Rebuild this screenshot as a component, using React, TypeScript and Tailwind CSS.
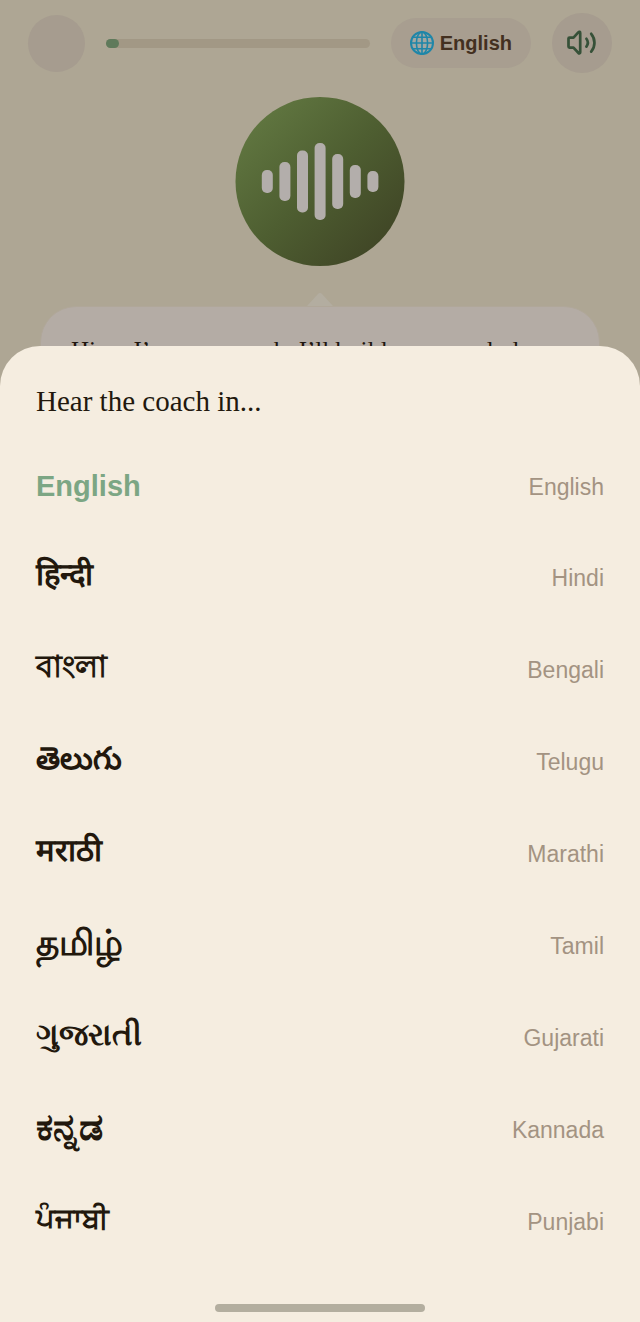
import React, { useState } from 'react';

interface Language {
  code: string;
  native: string;
  name: string;
  size: string;
}

// Scripts differ a lot in apparent size, so each one carries its own text size
const LANGUAGES: Language[] = [
  { code: 'en', native: 'English', name: 'English', size: 'text-[29px]' },
  { code: 'hi', native: 'हिन्दी', name: 'Hindi', size: 'text-[31px] pb-1.5' },
  { code: 'bn', native: 'বাংলা', name: 'Bengali', size: 'text-[31px] pb-1.5' },
  { code: 'te', native: 'తెలుగు', name: 'Telugu', size: 'text-[31px] pb-1.5' },
  { code: 'mr', native: 'मराठी', name: 'Marathi', size: 'text-[31px] pb-1.5' },
  { code: 'ta', native: 'தமிழ்', name: 'Tamil', size: 'text-[36px] pb-1.5' },
  { code: 'gu', native: 'ગુજરાતી', name: 'Gujarati', size: 'text-[31px] pb-1.5' },
  { code: 'kn', native: 'ಕನ್ನಡ', name: 'Kannada', size: 'text-[38px] pb-1.5' },
  { code: 'pa', native: 'ਪੰਜਾਬੀ', name: 'Punjabi', size: 'text-[29px] pb-1.5' },
];

const WAVE_BARS = [23, 39, 62, 77, 55, 33, 21];

const GlobeIcon: React.FC = () => (
  <svg width="24" height="24" viewBox="0 0 24 24" fill="none" stroke="#1f86a8" strokeWidth="1.6" aria-hidden="true">
    <circle cx="12" cy="12" r="11" fill="#a3a7a2" strokeWidth="2" />
    <ellipse cx="12" cy="12" rx="5.6" ry="11" />
    <path d="M12 1v22M1 12h22M3 6.2h18M3 17.8h18" />
  </svg>
);

const SpeakerIcon: React.FC = () => (
  <svg
    width="32"
    height="28"
    viewBox="0 0 32 28"
    fill="none"
    stroke="#365138"
    strokeWidth="2.7"
    strokeLinecap="round"
    strokeLinejoin="round"
    aria-hidden="true"
  >
    <path d="M3.5 8.6h4l5-5.4c.7-.8 1.7-.4 1.7.7v19.4c0 1.1-1 1.5-1.7.7l-5-5.4h-4c-.6 0-1-.4-1-1v-8c0-.6.4-1 1-1z" />
    <path d="M20.4 9.8a6.5 6.5 0 0 1 0 7.8" />
    <path d="M25.2 4.8a13.8 13.8 0 0 1 0 17.8" />
  </svg>
);

const CoachAvatar: React.FC = () => (
  <svg width="170" height="170" viewBox="0 0 170 170" role="img" aria-label="Coach">
    <defs>
      <linearGradient id="coach" x1="0.12" y1="0.12" x2="0.88" y2="0.88">
        <stop offset="0" stopColor="#607640" />
        <stop offset="0.5" stopColor="#4e5e31" />
        <stop offset="1" stopColor="#404626" />
      </linearGradient>
    </defs>
    <circle cx="85" cy="84.5" r="84.5" fill="url(#coach)" />
    {WAVE_BARS.map((height, index) => (
      <rect
        key={index}
        x={26.8 + index * 17.6}
        y={84.5 - height / 2}
        width="11"
        height={height}
        rx="5"
        fill="#b3aeab"
      />
    ))}
  </svg>
);

export default function App() {
  const [selected, setSelected] = useState('en');
  const current = LANGUAGES.find(l => l.code === selected);

  return (
    <div className="relative min-h-screen overflow-hidden bg-[#aea694] font-['Liberation_Sans',sans-serif]">
      {/* Top bar */}
      <header className="flex items-center gap-[21px] px-7 pt-[13px]">
        <button aria-label="Back" className="size-[57px] shrink-0 rounded-full bg-[#a69c8f]" />
        <div className="h-[9px] flex-1 rounded-full bg-[#a29885]">
          <div className="h-full w-[13px] rounded-full bg-[#5f7a5b]" />
        </div>
        <button className="flex h-[50px] items-center gap-1.5 rounded-full bg-[#a89e90] px-[19px] text-[20px] font-bold text-[#433020]">
          <GlobeIcon />
          {current?.native}
        </button>
        <button
          aria-label="Mute"
          className="flex size-[60px] shrink-0 items-center justify-center rounded-full bg-[#a69c8f]"
        >
          <SpeakerIcon />
        </button>
      </header>

      {/* Coach */}
      <main className="px-10">
        <div className="flex flex-col items-center pt-6">
          <CoachAvatar />
          <svg width="26" height="14" viewBox="0 0 26 14" className="mt-[25px]" aria-hidden="true">
            <path d="M0 14 11 2q2-2 4 0l11 12z" fill="#b3ada0" />
          </svg>
        </div>
        <p className="rounded-[36px] border border-[#b0a799] bg-[#b4aca5] px-[30px] py-7 font-['Liberation_Serif',serif] text-[25px] leading-[32px] text-[#1f160e]">
          Hi — I’m your coach. I’ll build your meal plan
        </p>
      </main>

      {/* Language sheet */}
      <section
        role="dialog"
        aria-labelledby="sheet-title"
        className="absolute inset-x-0 bottom-0 rounded-t-[40px] bg-[#f5ede0] px-9 pt-8 pb-[10px]"
      >
        <h2 id="sheet-title" className="font-['Liberation_Serif',serif] text-[29px] leading-[46px] text-[#22180d]">
          Hear the coach in...
        </h2>
        <ul className="mt-[18px]">
          {LANGUAGES.map(lang => (
            <li key={lang.code} className="h-[92px] first:h-[90px]">
              <button
                onClick={() => setSelected(lang.code)}
                className="flex h-full w-full items-center justify-between text-left"
              >
                <span
                  className={`font-bold ${lang.size} ${
                    lang.code === selected ? 'text-[#7ca684]' : 'text-[#22180d]'
                  }`}
                >
                  {lang.native}
                </span>
                <span className="text-[23px] text-[#a39382]">{lang.name}</span>
              </button>
            </li>
          ))}
        </ul>
        <div className="mx-auto mt-[36px] h-2 w-[37%] rounded-full bg-[#b3ae9f]" />
      </section>
    </div>
  );
}
